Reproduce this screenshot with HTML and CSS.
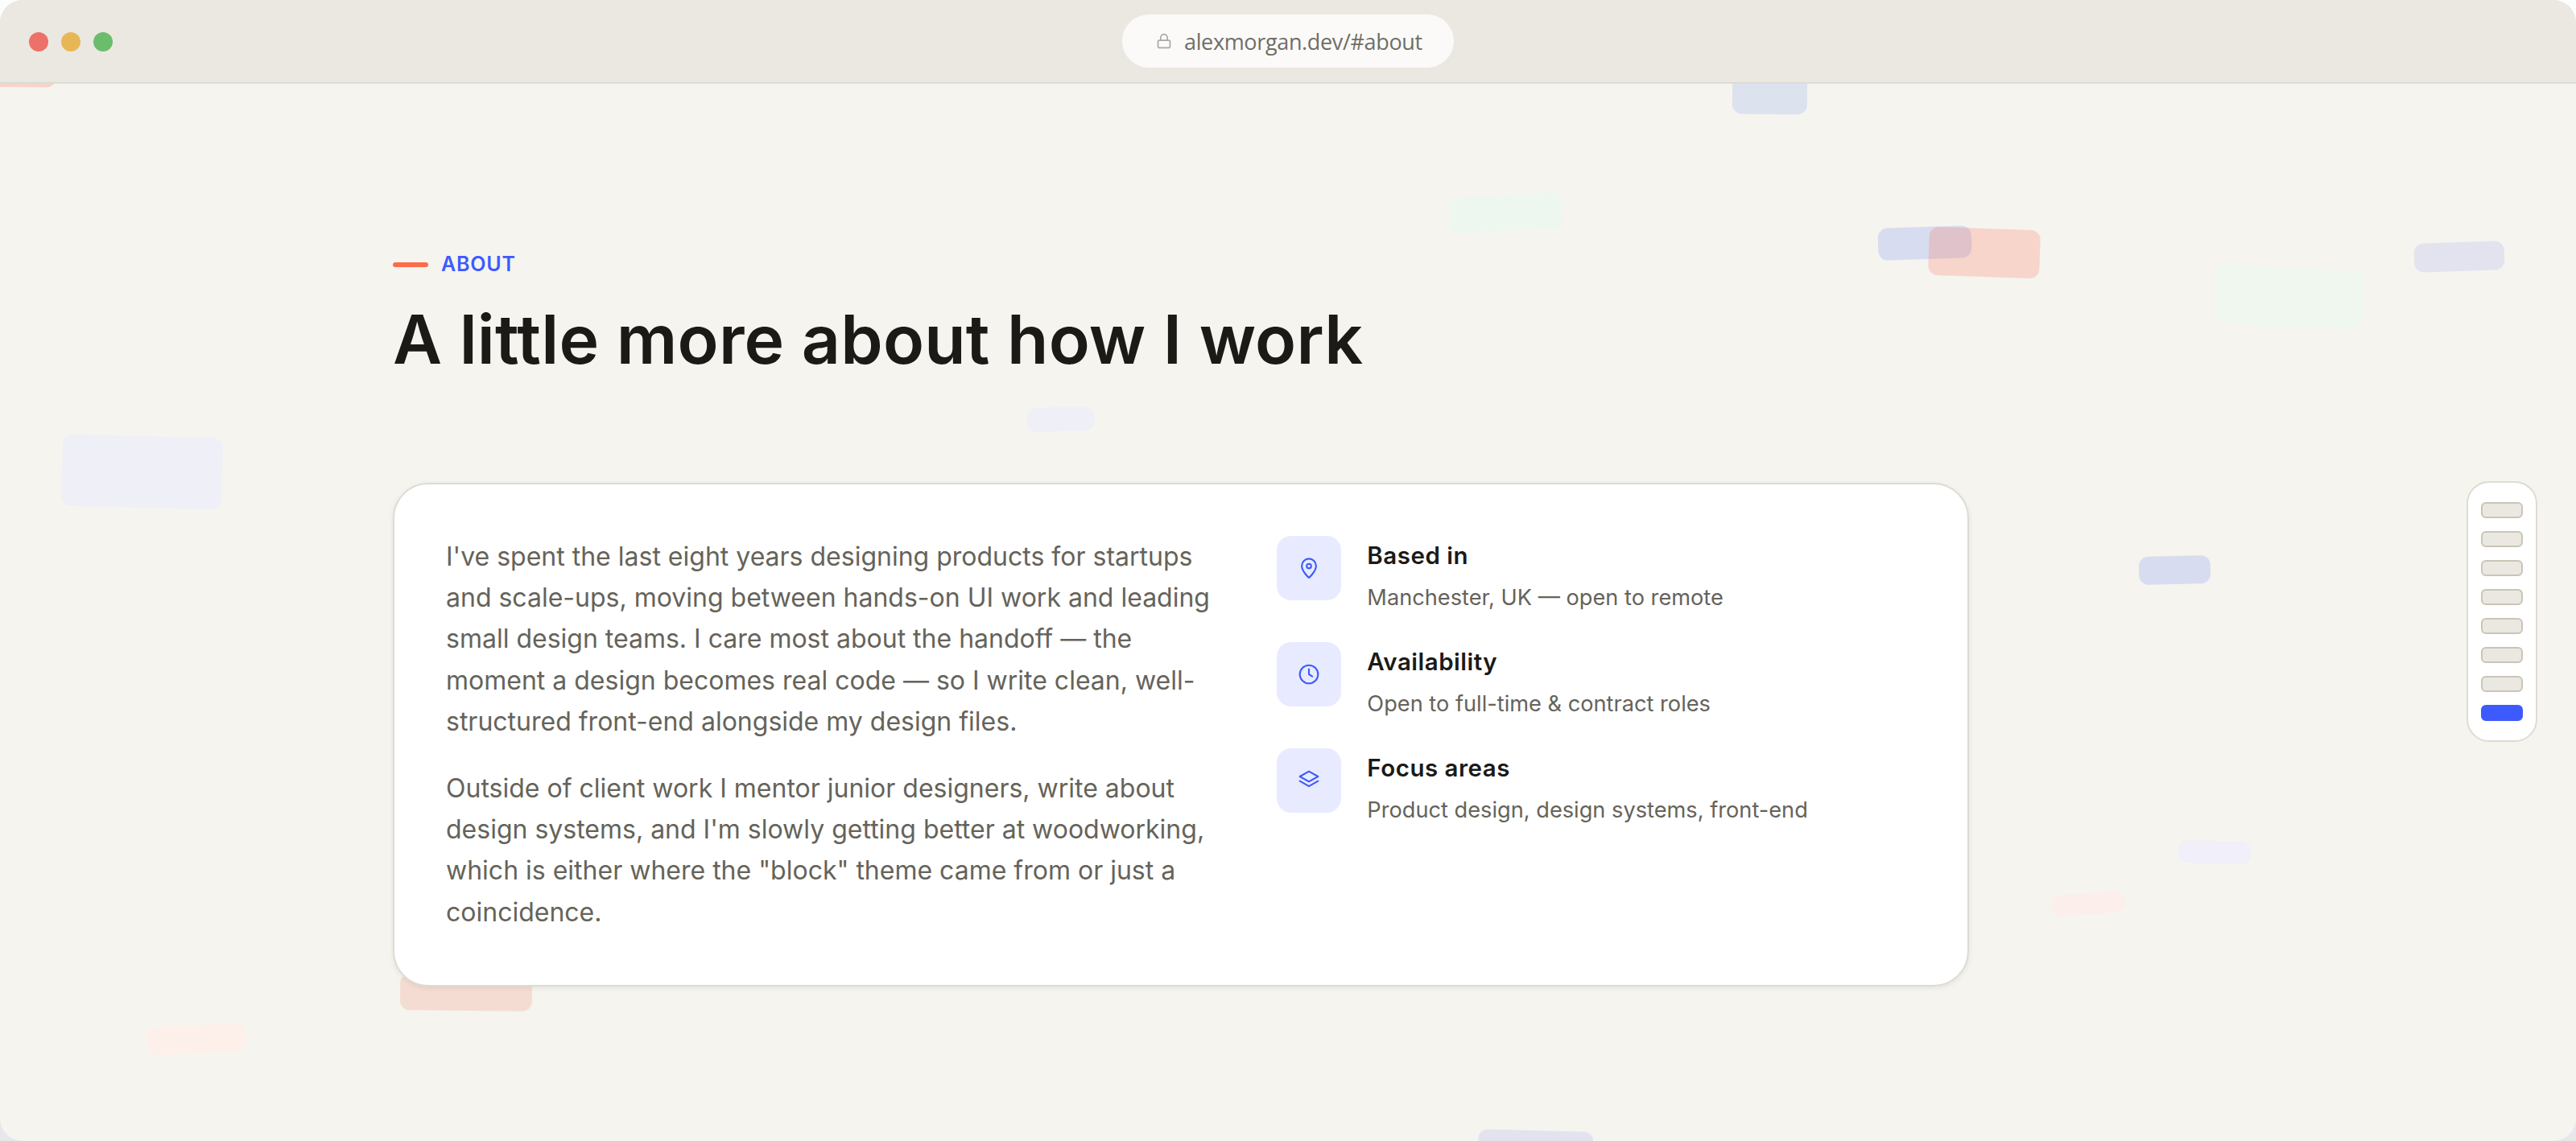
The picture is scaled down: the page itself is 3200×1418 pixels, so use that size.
FILE: index.html
```
<!DOCTYPE html>
<html lang="en">
<head>
    <meta charset="UTF-8">
    <meta name="viewport" content="width=device-width, initial-scale=1.0">
    <title>Alex Morgan - About</title>
    <link rel="stylesheet" href="styles.css">
</head>
<body>

    <div class="window">
        <header class="topbar">
            <div class="dots">
                <span class="dot red"></span>
                <span class="dot yellow"></span>
                <span class="dot green"></span>
            </div>
            <div class="address">
                <svg class="lock" viewBox="0 0 24 24"><rect x="3" y="11" width="18" height="11" rx="2"/><path d="M7 11V7a5 5 0 0 1 10 0v4"/></svg>
                <span class="url">alexmorgan.dev/#about</span>
            </div>
        </header>

        <main class="page">
            <!-- floating background blocks -->
            <div class="blocks">
                <span class="block b1"></span>
                <span class="block b2"></span>
                <span class="block b3"></span>
                <span class="block b4"></span>
                <span class="block b5"></span>
                <span class="block b6"></span>
                <span class="block b7"></span>
                <span class="block b8"></span>
                <span class="block b9"></span>
                <span class="block b10"></span>
                <span class="block b11"></span>
                <span class="block b12"></span>
                <span class="block b13"></span>
                <span class="block b14"></span>
                <span class="block b15"></span>
            </div>

            <section class="about" id="about">
                <p class="eyebrow">ABOUT</p>
                <h1>A little more about how I work</h1>

                <div class="card">
                    <div class="bio">
                        <p>I've spent the last eight years designing products for startups and scale-ups, moving between hands-on UI work and leading small design teams. I care most about the handoff — the moment a design becomes real code — so I write clean, well-structured front-end alongside my design files.</p>
                        <p>Outside of client work I mentor junior designers, write about design systems, and I'm slowly getting better at woodworking, which is either where the "block" theme came from or just a coincidence.</p>
                    </div>
                    <ul class="facts">
                        <li>
                            <span class="icon">
                                <svg viewBox="0 0 24 24"><path d="M12 22.300s7.600-6.700 7.600-12.700a7.600 7.600 0 0 0-15.200 0C4.400 15.600 12 22.300 12 22.300z"/><circle cx="12" cy="9.900" r="2.400"/></svg>
                            </span>
                            <div>
                                <h3>Based in</h3>
                                <p>Manchester, UK — open to remote</p>
                            </div>
                        </li>
                        <li>
                            <span class="icon">
                                <svg viewBox="0 0 24 24"><circle cx="12" cy="12" r="9.700"/><path d="M12 6.500V12l3.600 2.200"/></svg>
                            </span>
                            <div>
                                <h3>Availability</h3>
                                <p>Open to full-time &amp; contract roles</p>
                            </div>
                        </li>
                        <li>
                            <span class="icon">
                                <svg viewBox="0 0 24 24"><path d="M12 2.200l9.700 5.500-9.700 5.500-9.700-5.500z"/><path d="M2.300 12.600l9.700 5.500 9.700-5.500"/></svg>
                            </span>
                            <div>
                                <h3>Focus areas</h3>
                                <p>Product design, design systems, front-end</p>
                            </div>
                        </li>
                    </ul>
                </div>
            </section>

            <nav class="side-nav">
                <a href="#"></a>
                <a href="#"></a>
                <a href="#"></a>
                <a href="#"></a>
                <a href="#"></a>
                <a href="#"></a>
                <a href="#"></a>
                <a href="#about" class="active"></a>
            </nav>
        </main>
    </div>

</body>
</html>
```
FILE: styles.css
```
* {
    box-sizing: border-box;
    margin: 0;
    padding: 0;
}

body {
    font-family: Inter, sans-serif;
    background: linear-gradient(#fdfdfd, #e6e7ea);
    color: #1b1a17;
    height: 1418px;
    overflow: hidden;
}

.window {
    display: flex;
    flex-direction: column;
    height: 1418px;
    background: #f5f4ef;
    border-radius: 28px;
    overflow: hidden;
}

/* browser bar */
.topbar {
    display: grid;
    grid-template-columns: 1fr auto 1fr;
    align-items: center;
    height: 104px;
    padding: 0 36px;
    background: #ebe8e2;
    border-bottom: 2px solid #dcdbd5;
}

.dots {
    display: flex;
    gap: 16px;
    padding-top: 2px;
}

.dot {
    width: 24px;
    height: 24px;
    border-radius: 50%;
}

.red {
    background: #ec7168;
}

.yellow {
    background: #e8b755;
}

.green {
    background: #6bbd6b;
}

.address {
    display: flex;
    align-items: center;
    gap: 15px;
    width: 412px;
    height: 66px;
    padding-left: 42px;
    border-radius: 33px;
    background: #fbfaf8;
}

.lock {
    width: 20px;
    height: 20px;
    fill: none;
    stroke: #aaa9a4;
    stroke-width: 2;
}

.url {
    font-family: "Open Sans", sans-serif;
    font-size: 27px;
    letter-spacing: -0.35px;
    color: #6f6e67;
    white-space: nowrap;
}

/* page */
.page {
    position: relative;
    flex: 1;
    display: flex;
    align-items: flex-start;
    justify-content: space-between;
    padding: 204px 48px 0 488px;
    overflow: hidden;
}

.about {
    position: relative;
    width: 1958px;
}

.eyebrow {
    display: flex;
    align-items: center;
    gap: 16px;
    height: 40px;
    font-size: 25px;
    font-weight: 600;
    letter-spacing: 0.8px;
    color: #3d5afe;
}

.eyebrow::before {
    content: "";
    width: 44px;
    height: 6px;
    margin-top: 2px;
    border-radius: 3px;
    background: #ff6b4a;
}

h1 {
    height: 104px;
    margin-top: 22px;
    font-size: 84px;
    line-height: 104px;
    font-weight: 600;
    letter-spacing: 0.2px;
    white-space: nowrap;
}

.card {
    display: grid;
    grid-template-columns: 1.2fr 1fr;
    gap: 80px;
    height: 626px;
    margin-top: 126px;
    padding: 64px;
    background: #fff;
    border: 2px solid #dedcd2;
    border-radius: 44px;
    box-shadow: 0 2px 6px rgba(27, 26, 23, 0.08);
}

.bio {
    font-size: 32px;
    line-height: 51.2px;
    color: #65635a;
}

.bio p + p {
    margin-top: 32px;
}

.facts {
    display: flex;
    flex-direction: column;
    gap: 52px;
    list-style: none;
}

.facts li {
    display: flex;
    gap: 32px;
    height: 80px;
}

.icon {
    display: flex;
    align-items: center;
    justify-content: center;
    width: 80px;
    height: 80px;
    border-radius: 18px;
    background: #e8ebff;
}

.icon svg {
    width: 28px;
    height: 28px;
    fill: none;
    stroke: #3d5afe;
    stroke-width: 1.800;
    stroke-linecap: round;
    stroke-linejoin: round;
}

.facts h3 {
    font-size: 29.5px;
    line-height: 48px;
    font-weight: 600;
    letter-spacing: 0.5px;
    white-space: nowrap;
}

.facts p {
    margin-top: 7px;
    font-size: 27.2px;
    line-height: 44px;
    color: #65635a;
    white-space: nowrap;
}

/* section indicator */
.side-nav {
    position: relative;
    display: flex;
    flex-direction: column;
    gap: 16px;
    margin-top: 290px;
    padding: 24px 16px;
    background: #fff;
    border: 2px solid #dedcd2;
    border-radius: 28px;
}

.side-nav a {
    width: 52px;
    height: 20px;
    background: #ebe8e2;
    border: 2px solid #c9c5b7;
    border-radius: 6px;
}

.side-nav .active {
    background: #3d5afe;
    border-color: #3d5afe;
}

/* background blocks */
.blocks {
    position: absolute;
    inset: 0;
}

.block {
    position: absolute;
    border-radius: 12px;
}

.b1 { left: -60px; top: -46px; width: 130px; height: 50px; background: #f6d4cb; transform: rotate(0.5deg); }
.b2 { left: 2152px; top: -12px; width: 93px; height: 50px; background: #dde2ef; transform: rotate(0.5deg); }
.b3 { left: 2333px; top: 178px; width: 116px; height: 40px; background: #d8dcf0; transform: rotate(-2deg); }
.b4 { left: 2396px; top: 180px; width: 138px; height: 60px; background: rgba(255, 107, 74, 0.22); transform: rotate(2deg); }
.b5 { left: 2752px; top: 229px; width: 184px; height: 73px; background: #eff7ef; transform: rotate(3deg); }
.b6 { left: 2999px; top: 197px; width: 112px; height: 36px; background: #e2e3ef; transform: rotate(-2deg); }
.b7 { left: 1801px; top: 138px; width: 139px; height: 45px; background: #edf7f0; transform: rotate(-3deg); }
.b8 { left: 1276px; top: 402px; width: 84px; height: 30px; background: #eff0f7; transform: rotate(-2deg); }
.b9 { left: 77px; top: 438px; width: 199px; height: 89px; background: #eff0f7; transform: rotate(1.5deg); }
.b10 { left: 2657px; top: 587px; width: 89px; height: 35px; background: #d8dcf0; transform: rotate(-1.5deg); }
.b11 { left: 2706px; top: 941px; width: 90px; height: 28px; background: #f0effa; transform: rotate(1.5deg); }
.b12 { left: 2548px; top: 1006px; width: 92px; height: 26px; background: #fceeeb; transform: rotate(-4deg); }
.b13 { left: 182px; top: 1170px; width: 124px; height: 35px; background: #fdefea; transform: rotate(-2.5deg); }
.b14 { left: 497px; top: 1107px; width: 164px; height: 45px; background: #f5dcd3; transform: rotate(0.6deg); }
.b15 { left: 1836px; top: 1301px; width: 143px; height: 50px; background: #e2e3ef; transform: rotate(1.5deg); }
```
